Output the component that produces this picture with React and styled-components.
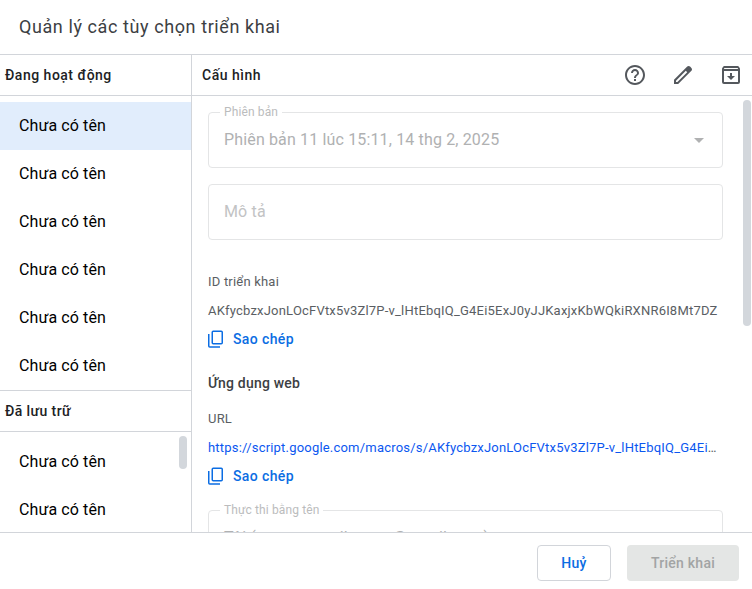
import React from "react";
import styled, { createGlobalStyle, css } from "styled-components";

const line = "#d2d5da";

const GlobalStyle = createGlobalStyle`
  * { box-sizing: border-box; }
  body { margin: 0; background: #fff; overflow: hidden; font-family: Roboto, "Noto Sans", sans-serif; }
`;

const Dialog = styled.div`
  width: 752px;
  height: 589px;
  display: flex;
  flex-direction: column;
  background: #fff;
`;

const TitleBar = styled.header`
  height: 54px;
  flex: none;
  padding-left: 19px;
`;

const Title = styled.h1`
  margin: 0;
  font-size: 18px;
  line-height: 54px;
  font-weight: 400;
  letter-spacing: 0.59px;
  color: #3c4043;
  white-space: nowrap;
`;

const Body = styled.main`
  height: 479px;
  flex: none;
  display: grid;
  grid-template-columns: 192px 560px;
  border-top: 1px solid ${line};
  border-bottom: 1px solid ${line};
`;

const Sidebar = styled.aside`
  height: 477px;
  display: flex;
  flex-direction: column;
  border-right: 1px solid ${line};
  overflow: hidden;
`;

const Heading = styled.h2`
  margin: 0;
  flex: none;
  height: 41px;
  padding-left: 5px;
  font-size: 14px;
  line-height: 40px;
  font-weight: 500;
  letter-spacing: ${(p) => p.$spacing ?? 0.5}px;
  color: #202124;
  border-bottom: 1px solid ${line};
`;

const List = styled.ul`
  position: relative;
  list-style: none;
  margin: 0;
  padding: 6px 0 0;
  flex: none;
  height: ${(p) => p.$height}px;
  overflow: hidden;
  border-bottom: ${(p) => (p.$ruled ? `1px solid ${line}` : "none")};
`;

const Item = styled.li`
  height: 48px;
  padding-left: 19px;
  font-size: 16px;
  line-height: 48px;
  letter-spacing: 0.1px;
  color: #000;
  background: ${(p) => (p.$selected ? "#e1edfc" : "transparent")};
`;

const Thumb = styled.div`
  position: absolute;
  width: 8px;
  border-radius: 4px;
  background: #d3d7dc;
  top: 4px;
  right: ${(p) => p.$right}px;
  height: ${(p) => p.$height}px;
`;

const Panel = styled.section`
  height: 477px;
  display: flex;
  flex-direction: column;
  min-width: 0;
`;

const Toolbar = styled.div`
  flex: none;
  height: 41px;
  display: flex;
  align-items: center;
  justify-content: space-between;
  padding: 0 9px 0 10px;
  border-bottom: 1px solid ${line};
`;

const ToolbarTitle = styled(Heading)`
  padding: 0;
  height: 40px;
  border: 0;
`;

const Actions = styled.div`
  display: flex;
  gap: 24px;
`;

const IconButton = styled.button`
  display: flex;
  padding: 0;
  border: 0;
  background: none;
  color: #54585d;
`;

const Content = styled.div`
  position: relative;
  flex: 1;
  min-height: 0;
  overflow: hidden;
  padding: 16px 29px 0 16px;
`;

const Field = styled.div`
  position: relative;
  height: 56px;
  margin-top: ${(p) => p.$gap ?? 0}px;
  padding: 0 15px;
  display: flex;
  align-items: center;
  justify-content: space-between;
  border: 1px solid #e4e5e6;
  border-radius: 4px;
  font-size: 16px;
  letter-spacing: 0.15px;
  color: ${(p) => (p.$placeholder ? "#c2c3c4" : "#b0b1b2")};
`;

const FieldText = styled.span`
  line-height: 24px;
`;

const FieldLabel = styled.span`
  position: absolute;
  top: -9px;
  left: 11px;
  padding: 0 4px;
  font-size: 12px;
  line-height: 16px;
  letter-spacing: 0.12px;
  color: #bbbcbd;
  background: #fff;
`;

const Chevron = styled.svg`
  margin-right: 3px;
`;

const Caption = styled.div`
  height: 20px;
  margin-top: ${(p) => p.$gap}px;
  font-size: 13px;
  line-height: 20px;
  letter-spacing: 0.2px;
  color: #5a5e63;
`;

const Value = styled.div`
  height: 20px;
  margin-top: 9px;
  width: 511px;
  font-size: 13px;
  line-height: 20px;
  letter-spacing: 0.2px;
  color: #5a5e63;
  white-space: nowrap;
`;

const Link = styled.a`
  color: #0b57f0;
`;

const CopyButton = styled.button`
  display: flex;
  align-items: center;
  gap: 8px;
  height: 20px;
  margin-top: 8px;
  padding: 0;
  border: 0;
  background: none;
  font: 500 14px/20px Roboto, sans-serif;
  letter-spacing: 0.38px;
  color: #0b6de3;
`;

const Subheading = styled.h3`
  margin: 24px 0 0;
  font-size: 14px;
  line-height: 20px;
  font-weight: 500;
  letter-spacing: 0.2px;
  color: #3c4043;
`;

const Footer = styled.footer`
  height: 56px;
  flex: none;
  display: flex;
  justify-content: flex-end;
  gap: 16px;
  padding: 12px 13px 0 0;
`;

const Button = styled.button`
  width: ${(p) => p.$width}px;
  height: 36px;
  padding: 0;
  border-radius: 4px;
  font: 500 14px/20px Roboto, sans-serif;
  letter-spacing: 0.25px;
  ${(p) =>
    p.$muted
      ? css`
          border: 0;
          background: #e4e6e5;
          color: #a2a4a4;
        `
      : css`
          border: 1px solid ${line};
          background: #fff;
          color: #0b6de3;
        `}
`;

const Glyph = ({ d, size = 24 }) => (
  <svg width={size} height={size} viewBox="0 0 24 24" fill="currentColor">
    <path d={d} />
  </svg>
);

const icons = {
  help: "M11 18h2v-2h-2v2zm1-16C6.48 2 2 6.48 2 12s4.480 10 10 10 10-4.480 10-10S17.520 2 12 2zm0 18c-4.410 0-8-3.590-8-8s3.590-8 8-8 8 3.590 8 8-3.590 8-8 8zm0-14c-2.210 0-4 1.790-4 4h2c0-1.100.9-2 2-2s2 .9 2 2c0 2-3 1.750-3 5h2c0-2.250 3-2.500 3-5 0-2.210-1.790-4-4-4z",
  edit: "M20.410 4.940l-1.350-1.350c-.78-.78-2.050-.78-2.830 0L3 16.820V21h4.180L20.410 7.770c.79-.78.79-2.050 0-2.830zM6.410 19.060L5 19v-1.360l9.820-9.820 1.410 1.410-9.820 9.830z",
  archive: "M18.700 3H5.300C4.900 3 4.500 3.200 4.300 3.500L3.300 5C3.100 5.300 3 5.700 3 6v13a2 2 0 0 0 2 2h14a2 2 0 0 0 2-2V6c0-.3-.1-.7-.3-1l-1-1.500C19.500 3.200 19.100 3 18.700 3zM5.500 5h13l.5.500V6H5v-.5L5.500 5zM5 19V8h14v11H5zm6-9v3H8l4 4 4-4h-3v-3h-2z",
};

const Copy = () => (
  <CopyButton>
    <svg width="17" height="18" viewBox="0 0 17 18" fill="none" stroke="currentColor" strokeWidth="1.5">
      <rect x="4.250" y="1.250" width="10" height="12.500" rx="1" />
      <path d="M.75 4v12a1 1 0 0 0 1 1H12" />
    </svg>
    Sao chép
  </CopyButton>
);

const active = Array.from({ length: 6 }, () => "Chưa có tên");
const archived = ["Chưa có tên", "Chưa có tên"];

export default function App() {
  return (
    <Dialog>
      <GlobalStyle />
      <TitleBar>
        <Title>Quản lý các tùy chọn triển khai</Title>
      </TitleBar>
      <Body>
        <Sidebar>
          <Heading>Đang hoạt động</Heading>
          <List $height={295} $ruled>
            {active.map((name, i) => (
              <Item key={i} $selected={i === 0}>{name}</Item>
            ))}
          </List>
          <Heading $spacing={0.4}>Đã lưu trữ</Heading>
          <List $height={100}>
            {archived.map((name, i) => (
              <Item key={i}>{name}</Item>
            ))}
            <Thumb $right={4} $height={33} />
          </List>
        </Sidebar>
        <Panel>
          <Toolbar>
            <ToolbarTitle>Cấu hình</ToolbarTitle>
            <Actions>
              <IconButton aria-label="help"><Glyph d={icons.help} /></IconButton>
              <IconButton aria-label="edit"><Glyph d={icons.edit} /></IconButton>
              <IconButton aria-label="archive"><Glyph d={icons.archive} /></IconButton>
            </Actions>
          </Toolbar>
          <Content>
            <Field>
              <FieldLabel>Phiên bản</FieldLabel>
              <FieldText>Phiên bản 11 lúc 15:11, 14 thg 2, 2025</FieldText>
              <Chevron width="10" height="5" viewBox="0 0 10 5" fill="currentColor">
                <path d="M0 0h10L5 5z" />
              </Chevron>
            </Field>
            <Field $gap={16} $placeholder>
              <FieldText>Mô tả</FieldText>
            </Field>
            <Caption $gap={32}>ID triển khai</Caption>
            <Value>AKfycbzxJonLOcFVtx5v3Zl7P-v_lHtEbqIQ_G4Ei5ExJ0yJJKaxjxKbWQkiRXNR6I8Mt7DZ</Value>
            <Copy />
            <Subheading>Ứng dụng web</Subheading>
            <Caption $gap={16}>URL</Caption>
            <Value>
              <Link>https://script.google.com/macros/s/AKfycbzxJonLOcFVtx5v3Zl7P-v_lHtEbqIQ_G4Ei</Link>…
            </Value>
            <Copy />
            <Field $gap={24}>
              <FieldLabel>Thực thi bằng tên</FieldLabel>
              <FieldText>Tôi (use.myemail.users@gmail.com)</FieldText>
            </Field>
            <Thumb $right={1} $height={226} />
          </Content>
        </Panel>
      </Body>
      <Footer>
        <Button $width={74}>Huỷ</Button>
        <Button $width={112} $muted>Triển khai</Button>
      </Footer>
    </Dialog>
  );
}
